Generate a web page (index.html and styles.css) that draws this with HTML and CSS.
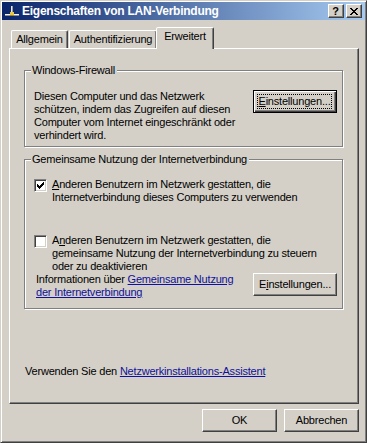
FILE: index.html
```html
<!DOCTYPE html>
<html lang="de">
  <head>
    <meta charset="UTF-8" />
    <title>Eigenschaften von LAN-Verbindung</title>
    <link rel="stylesheet" href="styles.css">
  </head>
  <body>
    <div class="window">
      <div class="window-inner">
        <!-- Title bar -->
        <div class="titlebar">
          <svg class="title-icon" width="16" height="16" viewBox="0 0 16 16" shape-rendering="crispEdges">
            <rect x="7" y="3" width="2" height="8" fill="#e8e8e8" />
            <rect x="8" y="3" width="1" height="8" fill="#9a9a9a" />
            <rect x="1" y="11" width="14" height="1" fill="#f4f4f4" />
            <rect x="1" y="12" width="14" height="1" fill="#8c8c8c" />
            <rect x="6" y="9" width="4" height="4" fill="#e8c84a" />
            <rect x="6" y="12" width="4" height="1" fill="#a08020" />
          </svg>
          <span class="title-text">Eigenschaften von LAN-Verbindung</span>
          <div class="caption-buttons">
            <div class="caption-btn help">?</div>
            <div class="caption-btn close">
              <svg width="8" height="7" viewBox="0 0 8 7" shape-rendering="crispEdges">
                <path d="M0 0h2v1h-2zM1 1h2v1h-2zM2 2h4v1h-4zM3 3h2v1h-2zM2 4h4v1h-4zM1 5h2v1h-2zM0 6h2v1h-2zM6 0h2v1h-2zM5 1h2v1h-2zM5 5h2v1h-2zM6 6h2v1h-2z" fill="#000" />
              </svg>
            </div>
          </div>
        </div>

        <div class="dialog">
          <!-- Tabs -->
          <div class="tabs">
            <div class="tab tab-first">Allgemein</div>
            <div class="tab tab-auth">Authentifizierung</div>
            <div class="tab tab-active">Erweitert</div>
          </div>

          <div class="panel">
            <fieldset class="group group-firewall">
              <legend>Windows-Firewall</legend>
              <div class="group-row">
                <p class="text">
                  Diesen Computer und das Netzwerk<br />
                  schützen, indem das Zugreifen auf diesen<br />
                  Computer vom Internet eingeschränkt oder<br />
                  verhindert wird.
                </p>
                <button class="btn btn-default"><span class="focus"><u>E</u>instellungen...</span></button>
              </div>
            </fieldset>

            <fieldset class="group group-ics">
              <legend>Gemeinsame Nutzung der Internetverbindung</legend>
              <div class="check-row check-first">
                <span class="checkbox">
                  <svg width="9" height="9" viewBox="0 0 9 9" shape-rendering="crispEdges">
                    <path d="M7 1h1v1h-1zM6 2h2v1h-2zM1 3h1v1h-1zM5 3h3v1h-3zM1 4h2v1h-2zM4 4h3v1h-3zM1 5h5v1h-5zM2 6h3v1h-3zM3 7h1v1h-1z" fill="#000" />
                  </svg>
                </span>
                <p class="text">
                  <u>A</u>nderen Benutzern im Netzwerk gestatten, die<br />
                  Internetverbindung dieses Computers zu verwenden
                </p>
              </div>
              <div class="check-row check-second">
                <span class="checkbox"></span>
                <p class="text">
                  A<u>n</u>deren Benutzern im Netzwerk gestatten, die<br />
                  gemeinsame Nutzung der Internetverbindung zu steuern<br />
                  oder zu deaktivieren
                </p>
              </div>
              <div class="info-row">
                <p class="text">
                  Informationen über <a href="#">Gemeinsame Nutzung<br />der Internetverbindung</a>
                </p>
                <button class="btn">E<u>i</u>nstellungen...</button>
              </div>
            </fieldset>

            <p class="text wizard">
              Verwenden Sie den <a href="#">Netzwerkinstallations-Assistent</a>
            </p>
          </div>

          <!-- Dialog buttons -->
          <div class="footer">
            <button class="btn btn-footer">OK</button>
            <button class="btn btn-footer">Abbrechen</button>
          </div>
        </div>
      </div>
    </div>
  </body>
</html>
```

FILE: styles.css
```css
* {
  margin: 0;
  padding: 0;
  box-sizing: border-box;
}

body {
  width: 367px;
  height: 443px;
  background: #d4d0c8;
  font-family: "Liberation Sans", Arial, sans-serif;
  font-size: 11px;
  line-height: 13px;
  letter-spacing: -0.2px;
  color: #000;
  overflow: hidden;
}

.window {
  width: 367px;
  height: 443px;
  border: 1px solid;
  border-color: #d4d0c8 #404040 #404040 #d4d0c8;
}

.window-inner {
  height: 100%;
  padding: 1px;
  box-shadow: inset 1px 1px 0 #fff, inset -1px -1px 0 #808080;
}

/* Title bar */
.titlebar {
  height: 18px;
  display: flex;
  align-items: center;
  padding: 0 3px 0 2px;
  background: linear-gradient(to right, #0a246a, #a6caf0);
}

.title-icon {
  flex: none;
  margin-right: 2px;
}

.title-text {
  flex: 1;
  color: #fff;
  font-weight: bold;
  font-size: 12px;
  letter-spacing: -0.25px;
  white-space: nowrap;
}

.caption-buttons {
  display: flex;
  gap: 2px;
}

.caption-btn {
  width: 16px;
  height: 14px;
  display: flex;
  align-items: center;
  justify-content: center;
  background: #d4d0c8;
  border: 1px solid;
  border-color: #fff #404040 #404040 #fff;
  box-shadow: inset -1px -1px 0 #808080;
}

.caption-btn.help {
  font-weight: bold;
  font-size: 11px;
  line-height: 11px;
  padding-right: 1px;
}

/* Dialog body */
.dialog {
  padding: 7px 0 0 7px;
}

.tabs {
  display: flex;
  align-items: flex-end;
  height: 21px;
  padding-left: 2px;
  position: relative;
  z-index: 1;
}

.tab {
  height: 18px;
  line-height: 17px;
  text-align: center;
  border: 1px solid;
  border-bottom: none;
  border-color: #fff #404040 transparent #fff;
  border-radius: 2px 2px 0 0;
  box-shadow: inset -1px 0 0 #808080;
}

.tab-first {
  width: 57px;
}

.tab-auth {
  width: 88px;
  margin-left: 1px;
}

.tab-active {
  width: 58px;
  height: 22px;
  line-height: 17px;
  margin-left: -1px;
  margin-bottom: -1px;
  background: #d4d0c8;
}

.panel {
  width: 350px;
  height: 356px;
  padding: 15px 14px 0 14px;
  border: 1px solid;
  border-color: #fff #404040 #404040 #fff;
  box-shadow: inset -1px -1px 0 #808080;
}

/* Group boxes */
.group {
  width: 319px;
  border: 1px solid #808080;
  box-shadow: 1px 1px 0 #fff, inset 1px 1px 0 #fff;
  padding: 0 5px 0 9px;
}

.group legend {
  margin-left: -3px;
  padding: 0 2px 0 1px;
  background: #d4d0c8;
}

.group-firewall {
  height: 83px;
  padding-top: 13px;
}

.group-row {
  display: flex;
  justify-content: space-between;
  align-items: flex-start;
}

.group-ics {
  height: 156px;
  margin-top: 6px;
  padding-top: 12px;
}

.check-row {
  display: flex;
  align-items: flex-start;
}

.check-second {
  margin-top: 30px;
}

.checkbox {
  flex: none;
  width: 13px;
  height: 13px;
  margin: 1px 5px 0 0;
  padding: 1px;
  background: #fff;
  border: 1px solid;
  border-color: #808080 #fff #fff #808080;
  box-shadow: inset 1px 1px 0 #404040, inset -1px -1px 0 #d4d0c8;
}

.checkbox svg {
  display: block;
}

.info-row {
  display: flex;
  justify-content: space-between;
  align-items: flex-start;
  padding-left: 2px;
}

.text {
  white-space: nowrap;
}

a {
  color: #10109a;
  text-decoration: underline;
}

.wizard {
  margin-top: 56px;
  padding-left: 1px;
}

/* Buttons */
.btn {
  width: 84px;
  height: 23px;
  font-family: inherit;
  font-size: 11px;
  line-height: 13px;
  letter-spacing: -0.2px;
  color: #000;
  background: #d4d0c8;
  border: 1px solid;
  border-color: #fff #404040 #404040 #fff;
  box-shadow: inset -1px -1px 0 #808080;
}

.btn-default {
  border: 1px solid #000;
  box-shadow: inset 1px 1px 0 #fff, inset -1px -1px 0 #404040, inset -2px -2px 0 #808080;
  padding: 3px 4px 4px 3px;
}

.focus {
  display: block;
  height: 15px;
  line-height: 13px;
  border: 1px dotted #000;
}

.footer {
  display: flex;
  justify-content: flex-end;
  gap: 7px;
  width: 350px;
  margin-top: 5px;
}

.btn-footer {
  width: 75px;
}
```
